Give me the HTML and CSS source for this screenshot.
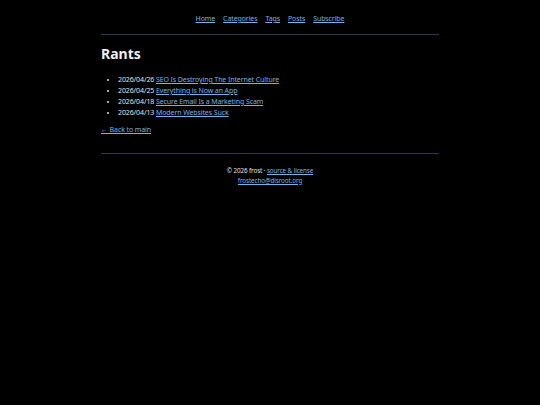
FILE: index.html
```html
<!DOCTYPE html>
<html>
<head>
<meta charset="utf-8">
<link rel="stylesheet" href="styles.css">
</head>
<body>
<div class="page">
  <nav class="nav">
    <a href="#">Home</a>
    <a href="#">Categories</a>
    <a href="#">Tags</a>
    <a href="#">Posts</a>
    <a href="#">Subscribe</a>
  </nav>
  <hr class="rule">
  <main>
    <h1 class="title">Rants</h1>
    <ul class="posts">
      <li>2026/04/26 <a href="#">SEO Is Destroying The Internet Culture</a></li>
      <li>2026/04/25 <a href="#">Everything is Now an App</a></li>
      <li>2026/04/18 <a href="#">Secure Email Is a Marketing Scam</a></li>
      <li>2026/04/13 <a href="#">Modern Websites Suck</a></li>
    </ul>
    <p class="back"><a href="#">← Back to main</a></p>
  </main>
  <hr class="rule">
  <footer class="footer">
    <div>© 2026 frost · <a href="#">source &amp; license</a></div>
    <div><a href="#">frostecho@disroot.org</a></div>
  </footer>
</div>
</body>
</html>
```
FILE: styles.css
```css
html, body {
  background: #000;
  margin: 0;
  padding: 0;
}
body {
  color: #e0e0e0;
  font-family: "Noto Sans", sans-serif;
  font-size: 7px;
  letter-spacing: -0.1px;
  line-height: 11px;
}
a {
  color: #78b2e4;
  text-decoration: underline;
}
.page {
  width: 338px;
  margin: 0 auto;
  padding-top: 13px;
}
.nav {
  display: flex;
  justify-content: center;
  gap: 8px;
  height: 11px;
}
.rule {
  border: 0;
  border-top: 1px solid #2e3a50;
  margin: 10px 0 0 0;
  height: 0;
}
.title {
  font-size: 14px;
  font-weight: bold;
  letter-spacing: 0;
  line-height: 20px;
  margin: 9px 0 0 0;
  color: #eee;
}
.posts {
  margin: 10px 0 0 0;
  padding-left: 17px;
}
.back {
  margin: 6px 0 0 0;
}
main {
  padding-bottom: 8px;
}
.footer {
  text-align: center;
  margin-top: 12px;
  font-size: 6.3px;
  line-height: 9.5px;
}
```
